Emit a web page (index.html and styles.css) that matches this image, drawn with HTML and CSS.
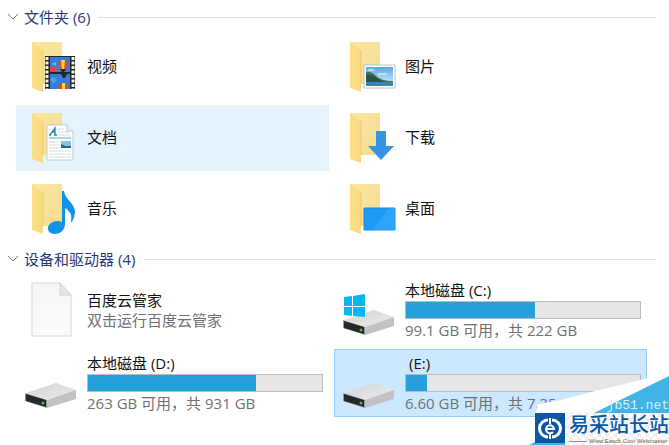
FILE: index.html
```html
<!DOCTYPE html>
<html lang="zh-CN">
<head>
<meta charset="utf-8">
<title>此电脑</title>
<meta name="viewport" content="width=device-width, initial-scale=1">
<link rel="stylesheet" href="styles.css">
</head>
<body>
<svg class="defs" aria-hidden="true">
  <defs>
    <linearGradient id="flap" x1="0" y1="0" x2="1" y2="0"><stop offset="0" stop-color="#fbdf85"/><stop offset="1" stop-color="#f8d983"/></linearGradient>
    <linearGradient id="back" x1="0" y1="0" x2="1" y2="1"><stop offset="0" stop-color="#fbe6a0"/><stop offset="1" stop-color="#f5dc92"/></linearGradient>
    <linearGradient id="driveTop" x1="0" y1="0" x2="1" y2="1"><stop offset="0" stop-color="#d2d2d4"/><stop offset="1" stop-color="#ececee"/></linearGradient>
    <linearGradient id="sky" x1="0" y1="0" x2="0" y2="1"><stop offset="0" stop-color="#55a8e8"/><stop offset="1" stop-color="#dff2fc"/></linearGradient>
    <linearGradient id="paper" x1="0" y1="0" x2="0" y2="1"><stop offset="0" stop-color="#f4f6f7"/><stop offset="1" stop-color="#fbfbfc"/></linearGradient>
    <symbol id="folder" viewBox="0 0 50 54">
      <path d="M3 3H33V45H14Z" fill="url(#back)"/>
      <path d="M3 3L14 11V53L3 49Z" fill="url(#flap)"/>
      <path d="M14 11V45" stroke="#ecca76" stroke-width="1"/>
    </symbol>
    <symbol id="drive" viewBox="0 0 52 28">
      <path d="M1 11L31 1L51 8L22 18Z" fill="url(#driveTop)"/>
      <path d="M22 18L51 8V17L22 26Z" fill="#c2c2c5"/>
      <path d="M0 11L22 18V26L0 19Z" fill="#98989b"/>
      <path d="M1 12L21 18V25L1 19Z" fill="#262827"/>
      <circle cx="18" cy="21" r="1.500" fill="#35c455"/>
    </symbol>
  </defs>
</svg>
<main class="explorer">
  <section>
    <h2 class="group"><svg class="chevron" viewBox="0 0 12 8"><path d="M1 1L6 6L11 1"/></svg><span>文件夹 (6)</span></h2>
    <div class="grid folders">
      <a class="tile" href="#">
        <svg class="icon" viewBox="0 0 50 54"><use href="#folder"/>
          <path d="M16 17H46V50H16Z" fill="#272521"/>
          <path d="M21 18H41V33H21ZM21 35H41V50H21Z" fill="#397bd8"/>
          <path d="M18 18V50M44 18V50" stroke="#f5f3e8" stroke-width="3" stroke-dasharray="3 1.500"/>
          <path d="M21 29Q23 24 28 30L27 33H21Z" fill="#df4452"/><path d="M22 25L27 23V27Z" fill="#54bfe2"/>
          <ellipse cx="34" cy="26" rx="4.500" ry="5" fill="#e94722"/><path d="M32 21H36L35 31H33Z" fill="#ffd437"/><path d="M31 30H37L35 33H33Z" fill="#292923"/>
          <path d="M32 35H38L36 39H34Z" fill="#18282e"/><path d="M21 40Q25 36 28 41L24 45Z" fill="#47a4dc"/><path d="M29 50V48Q34 40 39 48V50Z" fill="#e94722"/><path d="M33 44H36V50H33Z" fill="#ffd437"/>
        </svg><span>视频</span></a>
      <a class="tile" href="#">
        <svg class="icon" viewBox="0 0 50 54"><use href="#folder"/>
          <path d="M17 26H48V49H17Z" fill="#fff" stroke="#b9c2c7"/><path d="M19 28H46V47H19Z" fill="url(#sky)"/>
          <path d="M19 33Q24 32 29 37T46 42V44H19Z" fill="#427356"/><path d="M19 36Q25 35 30 39T40 43H19Z" fill="#295541"/><path d="M19 43H46V47H19Z" fill="#3f82ad"/>
          <path d="M21 31H27M31 35H40" stroke="#fff" stroke-width="2" opacity=".5"/>
        </svg><span>图片</span></a>
      <a class="tile hover" href="#">
        <svg class="icon" viewBox="0 0 50 54"><use href="#folder"/>
          <path d="M18 15H38L44 21V50H18Z" fill="#fff" stroke="#b7bfc5" stroke-width=".8"/><path d="M38 15V21H44" fill="#eef2f4" stroke="#b7bfc5" stroke-width=".8"/>
          <path d="M21 25L26 18L26 25M23 22H26M20 25H22M25 25H28" fill="none" stroke="#238cad" stroke-width="1.300"/>
          <path d="M20 28H42" stroke="#59abc5"/><path d="M29 19H35M29 22H41M29 25H41M20 32H30M20 35H30M20 38H30M20 41H42M20 44H42M20 47H42" stroke="#cbd4d8" stroke-width=".8"/>
          <path d="M32 31H42V38H32Z" fill="#83c2e3"/><path d="M32 34L36 36H42V38H32Z" fill="#256987"/>
        </svg><span>文档</span></a>
      <a class="tile" href="#">
        <svg class="icon" viewBox="0 0 50 54"><use href="#folder"/><path d="M29 21H39V36H47L34 50L21 36H29Z" fill="#3594e4"/></svg><span>下载</span></a>
      <a class="tile" href="#">
        <svg class="icon" viewBox="0 0 50 54"><use href="#folder"/>
          <path d="M33 10H35C36 19 46 22 46 31Q46 36 43 41H42Q44 31 36 27V43C36 49 31 53 26 53C20 53 17 48 20 44C23 40 29 39 33 41Z" fill="#0e93e7"/>
        </svg><span>音乐</span></a>
      <a class="tile" href="#">
        <svg class="icon" viewBox="0 0 50 54"><use href="#folder"/><path d="M17 27H48V49H17Z" fill="#1d9bf5" stroke="#1687d8"/><path d="M42 27H48V49H26Z" fill="#36a9fa" opacity=".7"/></svg><span>桌面</span></a>
    </div>
  </section>
  <section>
    <h2 class="group"><svg class="chevron" viewBox="0 0 12 8"><path d="M1 1L6 6L11 1"/></svg><span>设备和驱动器 (4)</span></h2>
    <div class="grid drives">
      <a class="tile" href="#">
        <svg class="icon file" viewBox="0 0 50 56"><path d="M3 1H31L42 13V54H3Z" fill="url(#paper)" stroke="#d5d7d9"/><path d="M31 1V13H42Z" fill="#e4e6e8" stroke="#cfd1d3"/></svg>
        <span class="info"><span>百度云管家</span><span class="sub">双击运行百度云管家</span></span></a>
      <a class="tile" href="#">
        <svg class="icon disk" viewBox="0 0 54 54"><use href="#drive" x="2" y="26" width="52" height="28"/><path d="M3 14L11 13V23H3ZM12 13L24 11V23H12ZM3 24H11V33L3 32ZM12 24H24V34L12 33Z" fill="#05b9ef"/></svg>
        <span class="info"><label for="c">本地磁盘 (C:)</label><progress id="c" max="100" value="55"></progress><span class="sub">99.1 GB 可用，共 222 GB</span></span></a>
      <a class="tile" href="#">
        <svg class="icon disk" viewBox="0 0 54 54"><use href="#drive" x="2" y="26" width="52" height="28"/></svg>
        <span class="info"><label for="d">本地磁盘 (D:)</label><progress id="d" max="100" value="72"></progress><span class="sub">263 GB 可用，共 931 GB</span></span></a>
      <a class="tile selected" href="#">
        <svg class="icon disk" viewBox="0 0 54 54"><use href="#drive" x="2" y="26" width="52" height="28"/></svg>
        <span class="info"><label class="unnamed" for="e">(E:)</label><progress id="e" max="100" value="9"></progress><span class="sub">6.60 GB 可用，共 7.35 GB</span></span></a>
    </div>
  </section>
  <aside class="watermark">
    <svg class="swoosh" viewBox="0 0 144 76"><path d="M10 76V46L13 35L36 31L70 22L120 10L144 0V76Z" fill="#fff"/><path d="M4 76L144 7V76Z" fill="#41b3e6"/></svg>
    <span class="site">jb51.net</span>
    <div class="brand">
      <svg class="logo" viewBox="0 0 30 30"><path d="M0 0H30V30H0Z" fill="#0c57a4"/><path d="M13 7A8.500 8.500 0 0 0 13 24M17 7A8.500 8.500 0 0 1 17 24" fill="none" stroke="#fff" stroke-width="3"/><path d="M11 16H19A4 4 0 1 0 18 19M15 5V11M15 20V26" fill="none" stroke="#fff" stroke-width="2"/></svg>
      <div class="words"><strong>易采站长站</strong><small>Www.Easck.Com Webmaster</small></div>
    </div>
  </aside>
</main>
</body>
</html>
```
FILE: styles.css
```css
* { box-sizing: border-box; }
body {
  margin: 0;
  background: #fff;
  color: #111;
  font: 15px/20px "Open Sans", "Noto Sans CJK SC", sans-serif;
}
.defs { position: absolute; width: 0; height: 0; }
.explorer { position: relative; min-height: 100vh; overflow: hidden; }
.group {
  display: flex;
  align-items: center;
  height: 34px;
  margin: 0;
  padding: 0 12px 0 7px;
  color: #26397a;
  font-size: 15px;
  font-weight: 400;
}
.group::after { content: ""; flex: 1; height: 1px; margin-left: 8px; background: #e2e2e2; }
.chevron { width: 12px; height: 8px; margin-right: 5px; fill: none; stroke: #777; }
.grid { display: grid; grid-template-columns: 1fr 1fr; column-gap: 5px; padding: 0 22px 0 16px; }
.folders { grid-auto-rows: 66px; row-gap: 5px; }
.folders .tile { padding-bottom: 2px; }
.drives { grid-auto-rows: 68px; row-gap: 5px; }
.tile {
  display: flex;
  align-items: center;
  padding: 0 6px 0 13px;
  color: inherit;
  text-decoration: none;
  white-space: nowrap;
}
.hover { background: #e5f3ff; }
.selected { background: #cce8ff; box-shadow: inset 0 0 0 1px #99cdf5; }
.icon { flex: none; width: 50px; height: 54px; margin-right: 8px; }
.file { height: 56px; }
.disk { width: 54px; height: 54px; margin: 0 10px 0 -6px; }
.info { display: flex; flex: 1; flex-direction: column; min-width: 0; }
.sub { color: #707070; }
.unnamed { padding-left: 4px; }
progress {
  display: block;
  width: 100%;
  height: 18px;
  margin: 1px 0;
  border: 1px solid #bcbcbc;
  background: #e6e6e6;
  appearance: none;
}
progress::-webkit-progress-bar { background: #e6e6e6; }
progress::-webkit-progress-value { background: #26a0da; }
.watermark { position: absolute; right: 0; bottom: 0; width: 144px; height: 76px; overflow: hidden; }
.swoosh { display: block; width: 144px; height: 76px; }
.site { position: absolute; right: 0; top: 30px; color: #d8f0fb; font: 13px/14px "Liberation Mono", monospace; }
.brand { position: absolute; left: 10px; right: 0; bottom: 0; display: flex; height: 32px; }
.logo { flex: none; width: 30px; height: 30px; }
.words {
  flex: 1;
  padding-left: 4px;
  background: repeating-conic-gradient(#eef0f1 0 25%, #fff 0 50%) 0 0 / 8px 8px;
  white-space: nowrap;
}
.words strong { display: block; color: #0c57a4; font-size: 20px; line-height: 24px; font-weight: 500; }
.words small {
  display: flex;
  align-items: center;
  color: #765b50;
  font: 6px/8px "Liberation Sans", sans-serif;
}
.words small::before { content: ""; width: 18px; height: 1px; margin-right: 2px; background: #a08c84; }
```
